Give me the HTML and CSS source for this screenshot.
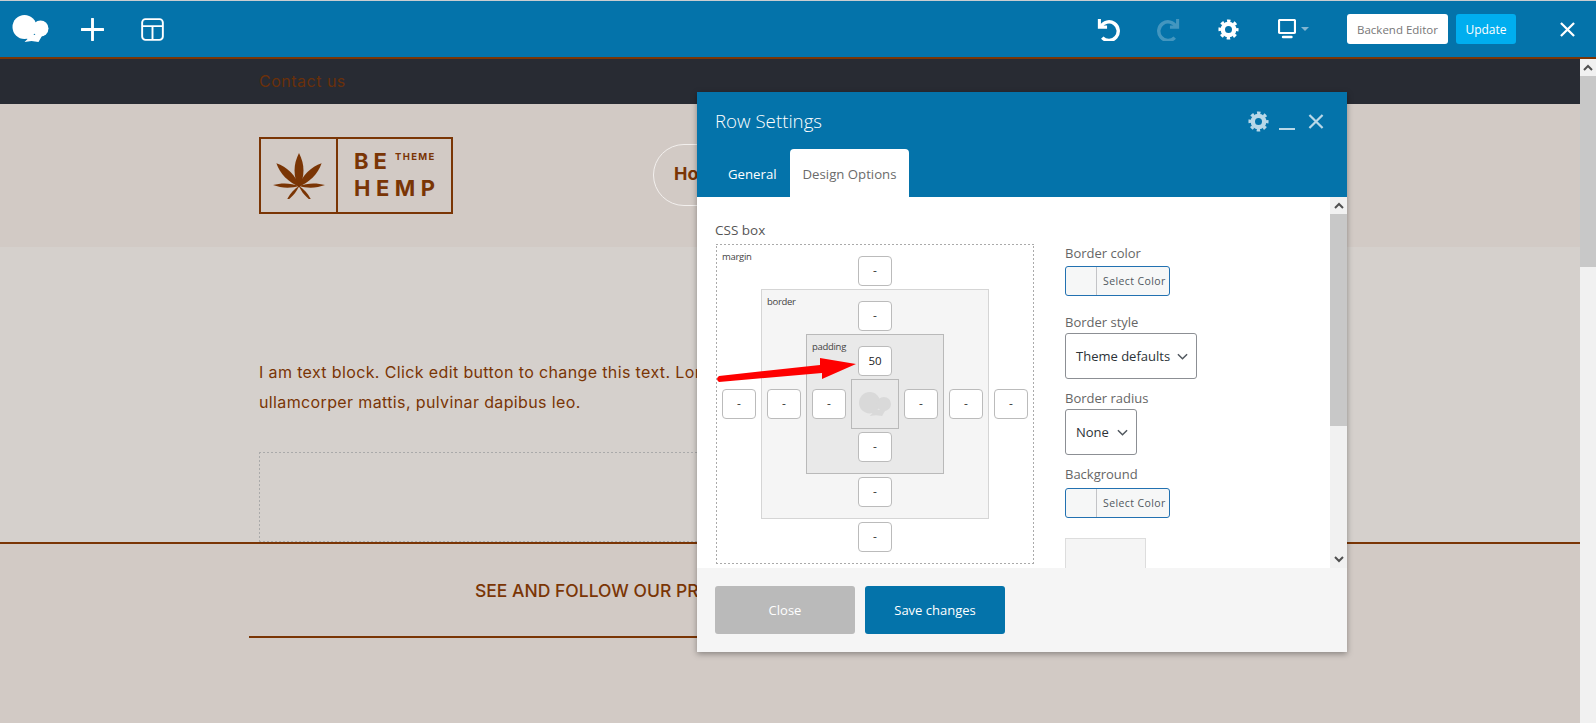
FILE: index.html
```html
<!DOCTYPE html>
<html lang="en">
<head>
    <meta charset="UTF-8">
    <meta name="viewport" content="width=device-width, initial-scale=1.0">
    <title>Row Settings</title>
    <link rel="stylesheet" href="styles.css">
</head>
<body>
    <svg class="sprites" width="0" height="0">
        <symbol id="cloud" viewBox="0 0 36 28">
            <ellipse cx="12" cy="12" rx="12" ry="12"/>
            <circle cx="28" cy="13.5" r="8"/>
            <path d="M12 20 L30 20 L26 27 L19 26 L12 27 L15 24 Z"/>
        </symbol>
        <symbol id="gear" viewBox="0 0 24 24">
            <circle cx="12" cy="12" r="6.5" fill="none" stroke="currentColor" stroke-width="5"/>
            <circle cx="12" cy="12" r="10" fill="none" stroke="currentColor" stroke-width="3" stroke-dasharray="4 3.854" stroke-dashoffset="2"/>
        </symbol>
        <symbol id="times" viewBox="0 0 16 16">
            <path d="M1 1 L15 15 M15 1 L1 15" fill="none" stroke="currentColor" stroke-width="2.4"/>
        </symbol>
        <symbol id="undo" viewBox="0 0 24 24">
            <path d="M2.5 1 V9.5 H10.5" fill="none" stroke="currentColor" stroke-width="3.2"/>
            <path d="M4 9 A 9.7 9.7 0 1 1 5.5 20.5" fill="none" stroke="currentColor" stroke-width="3.6"/>
        </symbol>
    </svg>

    <div class="window">
        <div class="page">
            <header class="topbar">
                <div class="topbar-left">
                    <svg class="brand"><use href="#cloud"/></svg>
                    <svg class="tool" viewBox="0 0 24 24"><path d="M12 1 V23 M1 12 H23" fill="none" stroke="#fff" stroke-width="3" stroke-linecap="round"/></svg>
                    <svg class="tool" viewBox="0 0 24 24"><rect x="1.2" y="1.2" width="21.6" height="21.6" rx="3.5" fill="none" stroke="#fff" stroke-width="2"/><path d="M1 8.5 H23 M12 8.5 V23" fill="none" stroke="#fff" stroke-width="2"/></svg>
                </div>
                <div class="topbar-right">
                    <svg class="tool undo"><use href="#undo"/></svg>
                    <svg class="tool redo"><use href="#undo"/></svg>
                    <svg class="gear"><use href="#gear"/></svg>
                    <div class="device">
                        <svg class="monitor" viewBox="0 0 18 20"><rect x="1" y="1" width="16" height="13" rx="1" fill="none" stroke="#fff" stroke-width="2.2"/><path d="M5 18 H13.5" stroke="#fff" stroke-width="2.4" stroke-linecap="round"/></svg>
                        <span class="caret"></span>
                    </div>
                    <button class="btn-backend">Backend Editor</button>
                    <button class="btn-update">Update</button>
                    <svg class="bar-close"><use href="#times"/></svg>
                </div>
            </header>

            <div class="strip">
                <a class="strip-link">Contact us</a>
            </div>

            <div class="site-head">
                <div class="logo">
                    <div class="logo-mark">
                        <svg viewBox="0 0 52 46" width="52" height="46">
                            <g fill="#7a3505" transform="translate(26 33)">
                                <path d="M0 2 C6 -10 6 -21 0 -33 C-6 -21 -6 -10 0 2 Z"/>
                                <path transform="rotate(-45)" d="M0 2 C5 -10 5 -22 0 -32 C-5 -22 -5 -10 0 2 Z"/>
                                <path transform="rotate(45)" d="M0 2 C5 -10 5 -22 0 -32 C-5 -22 -5 -10 0 2 Z"/>
                                <path transform="rotate(-88)" d="M0 0 C2.8 -8 2.8 -18 0 -26 C-2.8 -18 -2.8 -8 0 0 Z"/>
                                <path transform="rotate(88)" d="M0 0 C2.8 -8 2.8 -18 0 -26 C-2.8 -18 -2.8 -8 0 0 Z"/>
                                <path transform="rotate(-140)" d="M0 0 C2 -6 2 -13 0 -20 C-2 -13 -2 -6 0 0 Z"/>
                                <path transform="rotate(140)" d="M0 0 C2 -6 2 -13 0 -20 C-2 -13 -2 -6 0 0 Z"/>
                            </g>
                        </svg>
                    </div>
                    <div class="logo-text">
                        <div class="logo-line"><span class="logo-be">BE</span><span class="logo-theme">THEME</span></div>
                        <div class="logo-hemp">HEMP</div>
                    </div>
                </div>
                <a class="nav-home">Home</a>
            </div>

            <div class="content">
                <p class="lead">I am text block. Click edit button to change this text. Lorem ipsum dolor sit amet, consectetur adipiscing elit. Ut elit tellus, luctus<br>ullamcorper mattis, pulvinar dapibus leo.</p>
                <div class="placeholder"></div>
            </div>

            <div class="site-foot">
                <h4 class="foot-title">SEE AND FOLLOW OUR PRODUCTS</h4>
                <div class="foot-rule"></div>
            </div>
        </div>

        <div class="scrollbar">
            <div class="scroll-btn"><svg width="10" height="7" viewBox="0 0 10 7"><path d="M1 6 L5 2 L9 6" fill="none" stroke="#505050" stroke-width="2"/></svg></div>
            <div class="scroll-thumb"></div>
        </div>
    </div>

    <section class="modal">
        <div class="modal-head">
            <div class="modal-title-row">
                <h2 class="modal-title">Row Settings</h2>
                <div class="modal-icons">
                    <svg class="modal-gear"><use href="#gear"/></svg>
                    <span class="modal-min"></span>
                    <svg class="modal-x"><use href="#times"/></svg>
                </div>
            </div>
            <div class="tabs">
                <span class="tab">General</span>
                <span class="tab tab-active">Design Options</span>
            </div>
        </div>

        <div class="modal-body">
            <div class="modal-main">
                <div class="css-col">
                    <div class="field-label">CSS box</div>
                    <div class="box box-margin">
                        <span class="box-label">margin</span>
                        <span class="cell cell-top">-</span>
                        <span class="cell cell-left">-</span>
                        <div class="box box-border">
                            <span class="box-label">border</span>
                            <span class="cell cell-top">-</span>
                            <span class="cell cell-left">-</span>
                            <div class="box box-padding">
                                <span class="box-label">padding</span>
                                <span class="cell cell-top cell-value">50</span>
                                <span class="cell cell-left">-</span>
                                <div class="box-content">
                                    <svg class="content-logo"><use href="#cloud"/></svg>
                                </div>
                                <span class="cell cell-right">-</span>
                                <span class="cell cell-bottom">-</span>
                            </div>
                            <span class="cell cell-right">-</span>
                            <span class="cell cell-bottom">-</span>
                        </div>
                        <span class="cell cell-right">-</span>
                        <span class="cell cell-bottom">-</span>
                    </div>
                </div>

                <div class="options-col">
                    <div class="field-label">Border color</div>
                    <div class="color-pick"><span class="color-swatch"></span><span class="color-text">Select Color</span></div>
                    <div class="field-label label-style">Border style</div>
                    <div class="select select-wide">Theme defaults<svg width="11" height="7" viewBox="0 0 12 7"><path d="M1 1 L6 6 L11 1" fill="none" stroke="#50575e" stroke-width="1.6"/></svg></div>
                    <div class="field-label label-radius">Border radius</div>
                    <div class="select">None<svg width="11" height="7" viewBox="0 0 12 7"><path d="M1 1 L6 6 L11 1" fill="none" stroke="#50575e" stroke-width="1.6"/></svg></div>
                    <div class="field-label label-bg">Background</div>
                    <div class="color-pick color-pick-bg"><span class="color-swatch"></span><span class="color-text">Select Color</span></div>
                    <div class="image-slot"></div>
                </div>
            </div>

            <div class="modal-scroll">
                <div class="scroll-btn"><svg width="10" height="7" viewBox="0 0 10 7"><path d="M1 6 L5 2 L9 6" fill="none" stroke="#505050" stroke-width="2"/></svg></div>
                <div class="scroll-thumb"></div>
                <div class="scroll-down"><svg width="10" height="7" viewBox="0 0 10 7"><path d="M1 1 L5 5 L9 1" fill="none" stroke="#505050" stroke-width="2"/></svg></div>
            </div>
        </div>

        <div class="modal-foot">
            <button class="btn-close">Close</button>
            <button class="btn-save">Save changes</button>
        </div>
    </section>

    <svg class="arrow" width="150" height="40" viewBox="0 0 150 40">
        <path d="M5 32 L108 23 L108 29 L142 14 L106 8 L106 15 L5 26 Q1 29 5 32 Z" fill="#fe0000"/>
    </svg>
</body>
</html>
```

FILE: styles.css
```css
* {
    box-sizing: border-box;
}
html, body {
    height: 100%;
}
body {
    margin: 0;
    font-family: "Open Sans", sans-serif;
    overflow: hidden;
    background: #d2cac5;
}
.sprites {
    display: block;
    height: 0;
}
button {
    border: 0;
    font-family: "Open Sans", sans-serif;
}

/* page behind the modal */
.window {
    display: flex;
    height: 723px;
    border-top: 1px solid #c9cdd0;
}
.page {
    flex: 1;
    min-width: 0;
    display: flex;
    flex-direction: column;
    background: #d2cac5;
}
.topbar {
    height: 58px;
    flex: none;
    background: #0473aa;
    border-bottom: 2px solid #7a3505;
    width: 1596px;
    display: flex;
    justify-content: space-between;
    align-items: center;
    color: #fff;
}
.topbar-left {
    display: flex;
    align-items: center;
    padding-left: 12px;
}
.brand {
    width: 37px;
    height: 28px;
    fill: #fff;
    margin-right: 32px;
}
.tool {
    width: 23px;
    height: 23px;
}
.topbar-left .tool:last-child {
    margin-left: 37px;
}
.topbar-right {
    display: flex;
    align-items: center;
    padding-right: 21px;
}
.undo {
    color: #fff;
}
.redo {
    color: #fff;
    opacity: 0.25;
    transform: scaleX(-1);
    margin-left: 37px;
}
.gear {
    width: 21px;
    height: 21px;
    color: #fff;
    margin-left: 38px;
}
.device {
    display: flex;
    align-items: center;
    margin-left: 39px;
    width: 32px;
}
.monitor {
    width: 18px;
    height: 20px;
}
.caret {
    margin-left: 5px;
    border: 4px solid transparent;
    border-top-color: #82b5d1;
    border-bottom: 0;
}
.btn-backend {
    width: 101px;
    height: 30px;
    margin-left: 37px;
    background: #fff;
    color: #777;
    font-size: 11.5px;
    border-radius: 3px;
}
.btn-update {
    width: 60px;
    height: 30px;
    margin-left: 8px;
    background: #00aeef;
    color: #fff;
    font-size: 12px;
    border-radius: 3px;
}
.bar-close {
    width: 15px;
    height: 15px;
    margin-left: 44px;
    color: #fff;
}

.strip {
    height: 45px;
    flex: none;
    background: #282b33;
    padding: 0 0 2px 259px;
    display: flex;
    align-items: center;
}
.strip-link {
    font-family: Inter, sans-serif;
    font-size: 16px;
    letter-spacing: 0.5px;
    color: #6a300a;
}

.site-head {
    height: 143px;
    flex: none;
    display: flex;
    padding: 33px 0 0 259px;
}
.logo {
    width: 194px;
    height: 77px;
    border: 2px solid #7a3505;
    display: flex;
    color: #7a3505;
    font-family: Inter, sans-serif;
    font-weight: 700;
}
.logo-mark {
    width: 77px;
    border-right: 2px solid #7a3505;
    display: flex;
    align-items: center;
    justify-content: center;
}
.logo-text {
    padding: 12px 0 0 16px;
}
.logo-line {
    display: flex;
    height: 27px;
}
.logo-be {
    font-size: 22px;
    line-height: 21px;
    letter-spacing: 5px;
}
.logo-theme {
    font-size: 9.5px;
    line-height: 12px;
    letter-spacing: 1.4px;
    margin-left: 3px;
}
.logo-hemp {
    font-size: 22px;
    line-height: 21px;
    letter-spacing: 5.5px;
}
.nav-home {
    width: 160px;
    height: 62px;
    margin: 7px 0 0 200px;
    border: 1.5px solid #f3f0ee;
    border-radius: 31px;
    padding-left: 20px;
    font-family: Inter, sans-serif;
    font-size: 18px;
    font-weight: 700;
    line-height: 58px;
    color: #7a3505;
}

.content {
    height: 295px;
    flex: none;
    background: #d5d0cc;
    padding: 110px 240px 0 259px;
}
.lead {
    margin: 0;
    font-family: Inter, sans-serif;
    font-size: 16px;
    line-height: 30px;
    letter-spacing: 0.37px;
    color: #7a3505;
    white-space: nowrap;
}
.placeholder {
    height: 90px;
    margin-top: 35px;
}
.box-margin,
.placeholder {
    background:
        repeating-linear-gradient(90deg, #aaa 0 2px, transparent 2px 4px) top / 100% 1px no-repeat,
        repeating-linear-gradient(90deg, #aaa 0 2px, transparent 2px 4px) bottom / 100% 1px no-repeat,
        repeating-linear-gradient(0deg, #aaa 0 2px, transparent 2px 4px) left / 1px 100% no-repeat,
        repeating-linear-gradient(0deg, #aaa 0 2px, transparent 2px 4px) right / 1px 100% no-repeat;
}

.site-foot {
    border-top: 2px solid #7a3505;
    padding-top: 35px;
}
.foot-title {
    margin: 0 0 0 475px;
    font-family: Inter, sans-serif;
    font-size: 17.5px;
    font-weight: 500;
    line-height: 24px;
    color: #7a3505;
}
.foot-rule {
    height: 2px;
    margin: 33px 600px 0 249px;
    background: #7a3505;
}

.scrollbar {
    width: 16px;
    flex: none;
    margin-top: 58px;
    background: #f1f1f1;
    display: flex;
    flex-direction: column;
}
.scroll-btn {
    height: 17px;
    flex: none;
    display: flex;
    align-items: center;
    justify-content: center;
    background: #f1f1f1;
}
.scrollbar .scroll-thumb {
    height: 191px;
    background: #c8c8c8;
}

/* modal */
.modal {
    position: absolute;
    left: 697px;
    top: 92px;
    width: 650px;
    height: 560px;
    display: flex;
    flex-direction: column;
    background: #fff;
    box-shadow: 0 2px 6px rgba(0, 0, 0, 0.35);
}
.modal-head {
    height: 105px;
    flex: none;
    background: #0473aa;
    display: flex;
    flex-direction: column;
    justify-content: space-between;
}
.modal-title-row {
    display: flex;
    justify-content: space-between;
    align-items: center;
    padding: 17px 23px 0 18px;
}
.modal-title {
    margin: 0;
    font-size: 18.7px;
    font-weight: 300;
    line-height: 24px;
    color: #fff;
}
.modal-icons {
    display: flex;
    align-items: center;
    color: #b9d8e8;
}
.modal-gear {
    width: 21px;
    height: 21px;
}
.modal-min {
    width: 16px;
    height: 2px;
    margin: 16px 13px 0 10px;
    background: #b9d8e8;
}
.modal-x {
    width: 16px;
    height: 15px;
}
.tabs {
    display: flex;
    padding-left: 18px;
    font-size: 13.2px;
}
.tab {
    height: 48px;
    padding: 0 13px;
    line-height: 50px;
    color: #fff;
}
.tab-active {
    background: #fff;
    color: #6b6b6b;
    border-radius: 4px 4px 0 0;
}
.modal-body {
    flex: 1;
    min-height: 0;
    display: flex;
    overflow: hidden;
}
.modal-main {
    flex: 1;
    display: flex;
    padding: 24px 0 0 18px;
}
.modal-scroll {
    width: 17px;
    flex: none;
    display: flex;
    flex-direction: column;
    background: #f1f1f1;
}
.modal-scroll .scroll-thumb {
    height: 212px;
    background: #c8c8c8;
}
.scroll-down {
    margin-top: auto;
    height: 17px;
    display: flex;
    align-items: center;
    justify-content: center;
}
.css-col {
    width: 351px;
    margin-right: -1px;
    flex: none;
}
.field-label {
    font-size: 13px;
    line-height: 18px;
    color: #666;
}
.css-col .field-label {
    font-size: 13.5px;
    color: #555;
    margin-bottom: 5px;
}

/* css box model widget */
.box {
    display: grid;
    grid-template-columns: 34px auto 34px;
    grid-template-areas:
        "label top ."
        "left middle right"
        ". bottom .";
    gap: 3px 5px;
    justify-content: start;
    padding: 11px 5px;
    font-size: 10px;
}
.box-margin {
    width: 318px;
    height: 320px;
    margin-left: 1px;
    padding: 12px 6px;
}
.box-border {
    grid-area: middle;
    width: 228px;
    height: 230px;
    background: #f5f5f5;
    border: 1px solid #d5d5d5;
}
.box-padding {
    grid-area: middle;
    width: 138px;
    height: 140px;
    background: #e9e9e9;
    border: 1px solid #b9b9b9;
}
.box-content {
    grid-area: middle;
    width: 48px;
    height: 50px;
    border: 1px solid #b9b9b9;
    display: flex;
    align-items: center;
    justify-content: center;
}
.content-logo {
    width: 32px;
    height: 25px;
    fill: #d9d9d9;
}
.box-label {
    grid-area: label;
    margin-top: -6px;
    font-size: 9.5px;
    line-height: 14px;
    letter-spacing: -0.3px;
    color: #444;
    white-space: nowrap;
}
.cell {
    width: 34px;
    height: 30px;
    background: #fff;
    border: 1px solid #bbb;
    border-radius: 4px;
    font-size: 12px;
    line-height: 28px;
    text-align: center;
    color: #444;
}
.cell-top {
    grid-area: top;
    justify-self: center;
}
.cell-left {
    grid-area: left;
    align-self: center;
}
.cell-right {
    grid-area: right;
    align-self: center;
}
.cell-bottom {
    grid-area: bottom;
    justify-self: center;
}
.cell-value {
    color: #222;
    font-size: 11.5px;
}

/* right hand options */
.options-col {
    flex: 1;
    padding-top: 23px;
}
.color-pick {
    width: 105px;
    height: 30px;
    margin-top: 4px;
    display: flex;
    background: #f6f7f7;
    border: 1px solid #2271b1;
    border-radius: 3px;
}
.color-pick-bg {
    margin-top: 5px;
}
.color-swatch {
    width: 31px;
    border-right: 1px solid #c3c4c7;
}
.color-text {
    padding-left: 6px;
    font-size: 10.5px;
    line-height: 28px;
    letter-spacing: 0.4px;
    color: #50575e;
}
.select {
    width: 72px;
    height: 46px;
    margin-top: 2px;
    padding: 0 8px 0 10px;
    display: flex;
    justify-content: space-between;
    align-items: center;
    background: #fff;
    border: 1px solid #8c8f94;
    border-radius: 3px;
    font-size: 13px;
    white-space: nowrap;
    color: #2c3338;
}
.select-wide {
    width: 132px;
}
.label-style {
    margin-top: 17px;
}
.label-radius {
    margin-top: 10px;
}
.label-bg {
    margin-top: 10px;
}
.image-slot {
    width: 81px;
    height: 80px;
    margin-top: 20px;
    background: #f5f5f5;
    border: 1px solid #ddd;
}
.modal-foot {
    height: 84px;
    flex: none;
    display: flex;
    gap: 10px;
    padding: 18px;
    background: #f5f5f5;
}
.modal-foot button {
    width: 140px;
    height: 48px;
    border-radius: 3px;
    font-size: 13px;
    color: #fff;
}
.btn-close {
    background: #bababa;
}
.btn-save {
    background: #0473aa;
}

/* annotation on top of the screenshot */
.arrow {
    position: absolute;
    left: 714px;
    top: 350px;
}
```
